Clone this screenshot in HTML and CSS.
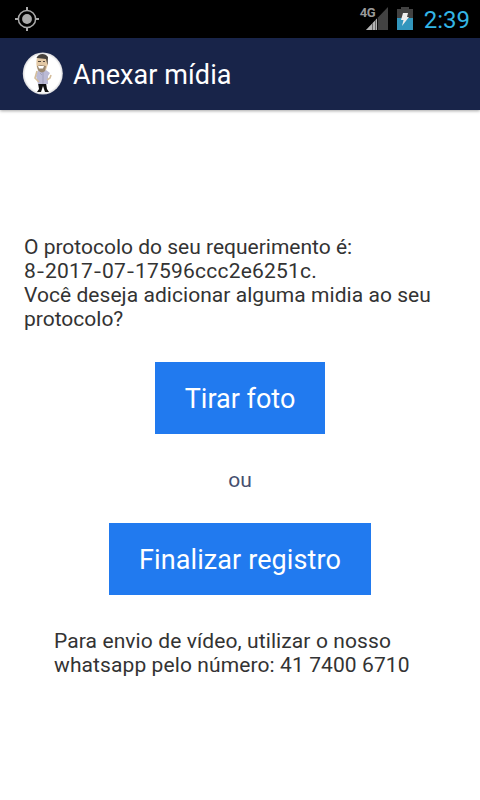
FILE: index.html
```html
<!DOCTYPE html>
<html lang="pt-BR">
<head>
<meta charset="utf-8">
<meta name="viewport" content="width=device-width">
<title>Anexar mídia</title>
<link rel="stylesheet" href="styles.css">
</head>
<body>
<div class="screen">
  <div class="status">
    <svg class="gps" width="26" height="26" viewBox="0 0 26 26" fill="none" stroke="#aaa">
      <circle cx="13" cy="13" r="8.6" stroke-width="1.5"/>
      <circle cx="13" cy="13" r="4.9" fill="#aaa" stroke="none"/>
      <path d="M13 1v4M13 21v4M1 13h4M21 13h4" stroke-width="2"/>
    </svg>
    <div class="indicators">
      <div class="signal">
        <span class="network">4G</span>
        <svg width="28" height="24" viewBox="0 0 28 24">
          <path d="M28 0v23H6z" fill="#424242"/>
          <path d="M17 11.500V23H6z" fill="#b5b5b5"/>
          <path d="M12.500 16v7M15.500 13v10" stroke="#666" stroke-width="1"/>
          <path d="M17.500 10v13" stroke="#111" stroke-width="1"/>
        </svg>
      </div>
      <svg class="battery" width="16" height="24" viewBox="0 0 16 24">
        <path d="M4 0h8v2h4v9H0V2h4z" fill="#424242"/>
        <path d="M0 11h16v12H0z" fill="#3296bd"/>
        <path d="M6 6h5l-1 4h2L5 19l1.500-6H4z" fill="#eee"/>
      </svg>
      <span class="clock">2:39</span>
    </div>
  </div>
  <header class="bar">
    <svg class="avatar" width="42" height="44" viewBox="0 0 42 44">
      <defs><radialGradient id="disc"><stop offset=".88" stop-color="#fff"/><stop offset="1" stop-color="#d5d5d8"/></radialGradient></defs>
      <ellipse cx="20.800" cy="21.500" rx="20" ry="21" fill="url(#disc)"/>
      <path d="M16 31l1 6-2 3h4l2-6 2 6h4l-2-3-1-6z" fill="#111"/>
      <path d="M16 18l-2 6 2 8h10v-8l2-3-4-3z" fill="#bbbad5"/>
      <path d="M15 19l-2 7 4 4M25 28l3-2 1-3" fill="none" stroke="#d4bd9c" stroke-width="1.600"/>
      <path d="M15 5c-1 5-1 10 1 13 2 2 6 2 8 0l2-6-1-7z" fill="#e3c8a4"/>
      <path d="M14.500 6c2-5 9-5 11.500-1l-.5 8-1.500-6-9-1z" fill="#46413c"/>
      <path d="M15 14l4-1 5 1-1 5c-2 2-5 2-7-1z" fill="#9b8870"/>
      <path d="M16 14h6l-1 2.500h-4z" fill="#fff"/>
      <path d="M16 9.500h3m2 0h2" stroke="#51463b"/>
      <path d="M21 20v12M18 21l2 2" fill="none" stroke="#8f8eaa" stroke-width=".6"/>
    </svg>
    <h1 class="title">Anexar mídia</h1>
  </header>
  <main class="content">
    <p class="message">O protocolo do seu requerimento é:<br><span class="code">8<span class="dash">-</span>2017<span class="dash">-</span>07<span class="dash">-</span>17596ccc2e6251c.</span><br><span class="question">Você deseja adicionar alguma midia ao seu</span><br>protocolo?</p>
    <button class="button photo">Tirar foto</button>
    <p class="or">ou</p>
    <button class="button finish">Finalizar registro</button>
    <p class="note">Para envio de vídeo, utilizar o nosso<br>whatsapp pelo número: 41 7400 6710</p>
  </main>
</div>
</body>
</html>
```

FILE: styles.css
```css
* { box-sizing: border-box; }
body { margin: 0; font-family: Roboto, sans-serif; background: #fff; }
p, h1 { margin: 0; font-weight: 400; }
.screen { width: 480px; height: 800px; display: flex; flex-direction: column; overflow: hidden; }
.status { height: 38px; background: #000; display: flex; align-items: flex-start; justify-content: space-between; padding: 0 10px 0 14px; }
.gps { margin-top: 6px; }
.indicators { display: flex; }
.signal { display: flex; position: relative; width: 28px; margin: 7px 9px 0 0; }
.network { position: absolute; left: 0; top: -1px; font: 700 13px/14px "Roboto", sans-serif; letter-spacing: -.4px; color: #999; }
.battery { margin: 7px 11px 0 0; }
.clock { color: #33b5e5; font-size: 24px; line-height: 40px; }
.bar { height: 72px; background: #182449; display: flex; align-items: center; padding-left: 22px; box-shadow: 0 1px 3px rgba(0, 0, 0, .35); }
.title { color: #fff; font-size: 27px; letter-spacing: .08px; margin-left: 9px; padding-top: 2px; line-height: 36px; }
.content { display: flex; flex-direction: column; align-items: center; padding-top: 125px; }
.message, .note { align-self: flex-start; color: #333; font-size: 21px; line-height: 24px; white-space: nowrap; }
.message { margin-left: 24px; }
.code { letter-spacing: .2px; }
.dash { display: inline-block; width: 9px; text-align: center; transform: scaleX(1.2); }
.question { letter-spacing: .05px; }
.button { height: 72px; border: 0; border-radius: 0; padding: 2px 0 0; background: #217aef; color: #fff; font: 400 27px/70px Roboto, sans-serif; }
.photo { width: 170px; margin-top: 31px; }
.finish { width: 262px; margin-top: 31px; letter-spacing: .1px; }
.or { margin-top: 34px; color: #46506f; font-size: 21px; line-height: 24px; }
.note { margin: 34px 0 0 54px; letter-spacing: .1px; }
```
